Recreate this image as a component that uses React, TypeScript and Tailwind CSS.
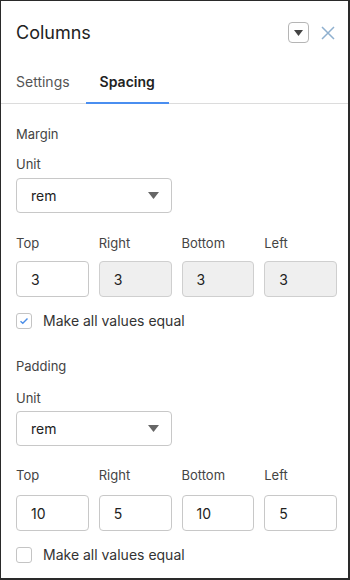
import React, { useState } from 'react';

const font = { fontFamily: 'Inter, "Noto Sans", sans-serif' };

const Caret = () => (
  <svg width="11" height="7" viewBox="0 0 11 7" className="text-[#666]">
    <path d="M0 0 H11 L5.5 7 Z" fill="currentColor" />
  </svg>
);

const UnitSelect: React.FC<{ className?: string }> = ({ className }) => (
  <div
    className={`flex h-[35px] w-[156px] items-center justify-between rounded-[4px] border border-[#c8c8c8] bg-white pl-[14px] pr-[12px] text-[14px] text-[#222] ${className}`}
  >
    <span>rem</span>
    <Caret />
  </div>
);

interface BoxProps {
  values: string[];
  linked: boolean;
  className?: string;
  inputGap?: string;
}

const SideInputs: React.FC<BoxProps> = ({ values, linked, className, inputGap }) => {
  const labels = ['Top', 'Right', 'Bottom', 'Left'];
  return (
    <div className={`grid w-[321px] grid-cols-4 gap-x-[10px] ${className}`}>
      {labels.map((label, i) => (
        <div key={label}>
          <div className="h-4 text-[13px] leading-4 text-[#444]">{label}</div>
          <div
            className={`flex h-[36px] items-center rounded-[4px] border pl-[14px] text-[14px] text-[#222] ${inputGap} ${
              linked && i > 0 ? 'border-[#cfcfcf] bg-[#efefef]' : 'border-[#c8c8c8] bg-white'
            }`}
          >
            {values[i]}
          </div>
        </div>
      ))}
    </div>
  );
};

const EqualCheckbox: React.FC<{ checked: boolean; className?: string }> = ({ checked, className }) => (
  <div className={`flex h-5 items-center ${className}`}>
    <div className="flex h-[16px] w-[16px] items-center justify-center rounded-[3px] border border-[#c4c4c4] bg-white">
      {checked && (
        <svg width="10" height="8" viewBox="0 0 10 8">
          <path d="M1.5 4.2 L3.8 6.3 L8.5 1.5" fill="none" stroke="#4a8de8" strokeWidth="1.4" />
        </svg>
      )}
    </div>
    <span className="ml-[11px] text-[14px] leading-5 text-[#333]">Make all values equal</span>
  </div>
);

export default function App() {
  const [tab, setTab] = useState('spacing');

  return (
    <div
      style={font}
      className="h-[580px] w-[350px] overflow-hidden border-t border-l border-r-2 border-b-2 border-[#2a2a2a] bg-white"
    >
      {/* header */}
      <div className="flex h-[63px] items-center justify-between pl-[15px] pr-[13px]">
        <h1 className="text-[18px] text-[#222]">Columns</h1>
        <div className="flex items-center gap-[12px]">
          <div className="flex h-[21px] w-[21px] items-center justify-center rounded-[4px] border border-[#b5b5b5]">
            <svg width="9" height="6" viewBox="0 0 9 6">
              <path d="M0 0 H9 L4.5 6 Z" fill="#444" />
            </svg>
          </div>
          <svg width="14" height="14" viewBox="0 0 14 14">
            <path d="M1 1 L13 13 M13 1 L1 13" stroke="#8fb0cf" strokeWidth="1.5" />
          </svg>
        </div>
      </div>

      {/* tabs */}
      <div className="flex border-b border-[#dcdcdc] pl-[15px]">
        <button
          onClick={() => setTab('settings')}
          className={`-mb-px border-b-2 pt-[8px] pb-[10px] pr-[16px] text-[14px] leading-5 ${
            tab === 'settings' ? 'border-[#4a8ef0] font-semibold text-[#222]' : 'border-transparent text-[#555]'
          }`}
        >
          Settings
        </button>
        <button
          onClick={() => setTab('spacing')}
          className={`-mb-px border-b-2 px-[14px] pt-[8px] pb-[10px] text-[14px] leading-5 ${
            tab === 'spacing' ? 'border-[#4a8ef0] font-semibold text-[#222]' : 'border-transparent text-[#555]'
          }`}
        >
          Spacing
        </button>
      </div>

      <div className="pl-[15px]">
        {/* margin */}
        <div className="mt-[22px] h-4 text-[13px] leading-4 text-[#444]">Margin</div>
        <div className="mt-[14px] h-4 text-[13px] leading-4 text-[#444]">Unit</div>
        <UnitSelect className="mt-[6px]" />
        <SideInputs values={['3', '3', '3', '3']} linked className="mt-[22px]" inputGap="mt-[10px]" />
        <EqualCheckbox checked className="mt-[14px]" />

        {/* padding */}
        <div className="mt-[27px] h-4 text-[13px] leading-4 text-[#444]">Padding</div>
        <div className="mt-[16px] h-4 text-[13px] leading-4 text-[#444]">Unit</div>
        <UnitSelect className="mt-[5px]" />
        <SideInputs values={['10', '5', '10', '5']} linked={false} className="mt-[21px]" inputGap="mt-[12px]" />
        <EqualCheckbox checked={false} className="mt-[14px]" />
      </div>
    </div>
  );
}
